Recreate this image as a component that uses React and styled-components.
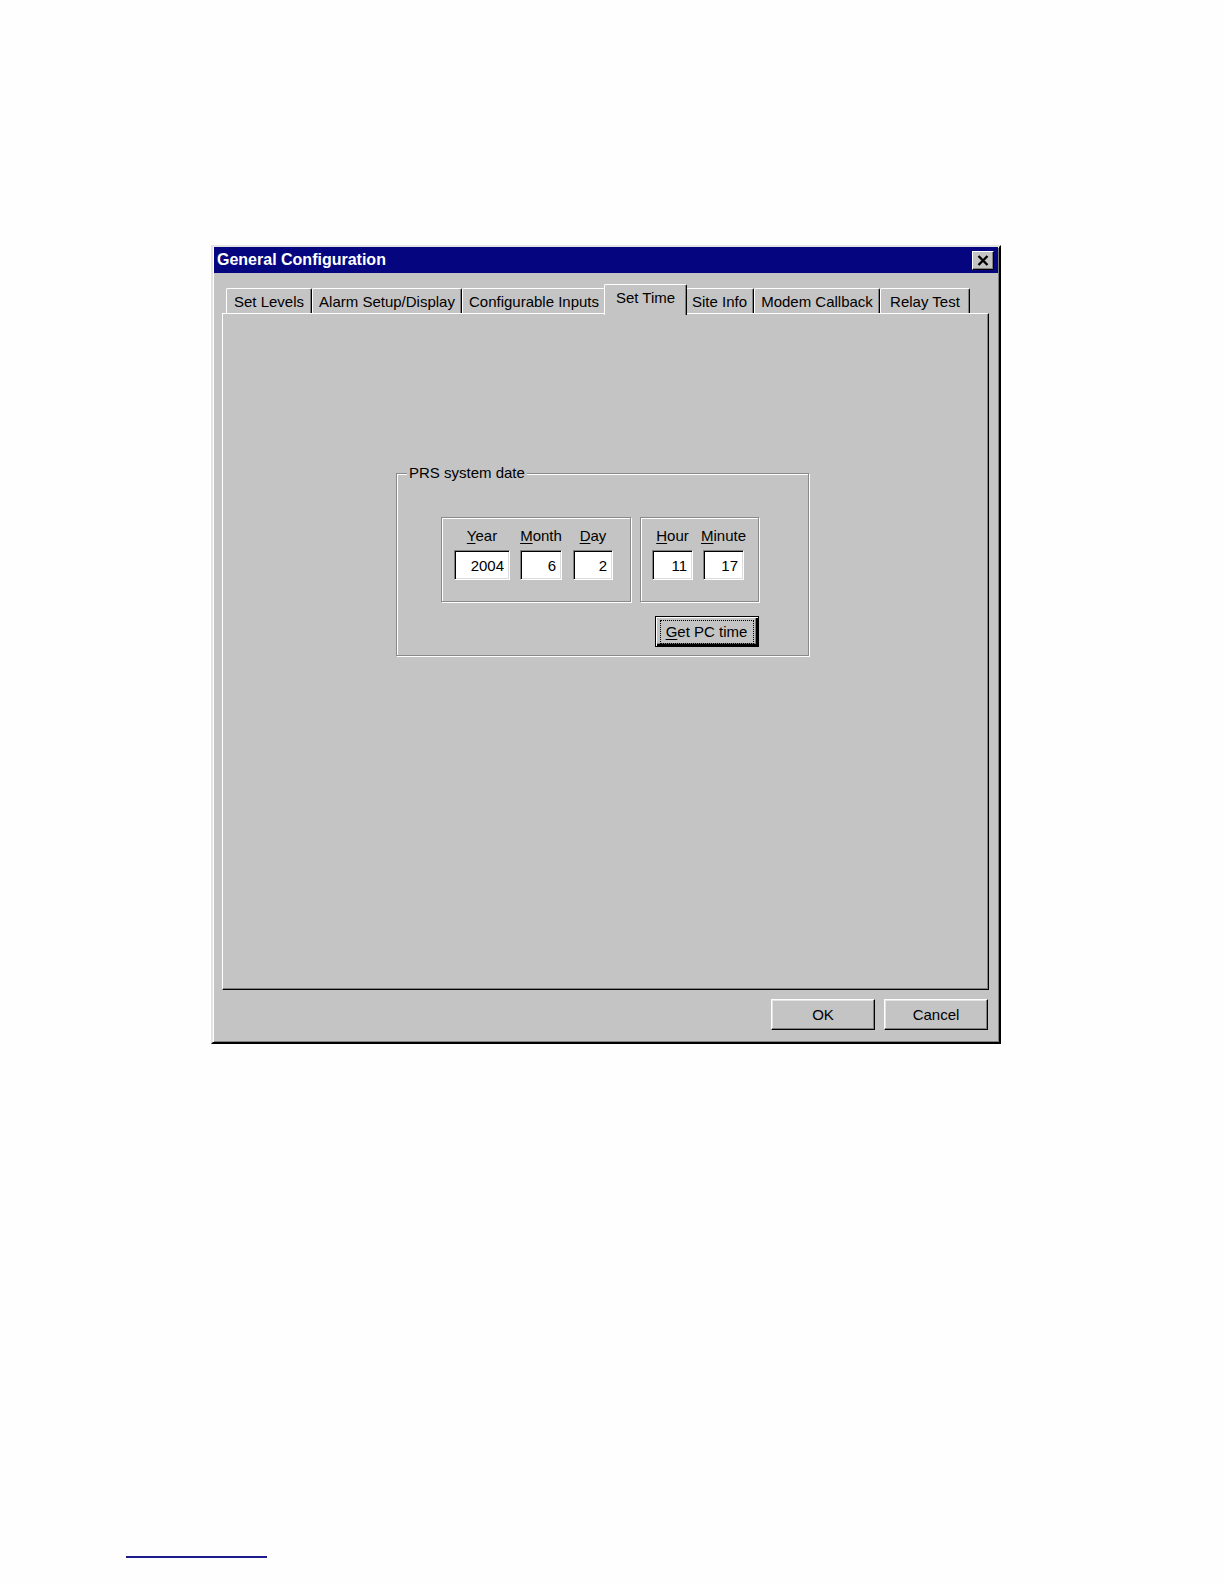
import React from "react";
import styled, { createGlobalStyle } from "styled-components";

const GlobalStyle = createGlobalStyle`
  html, body {
    margin: 0;
    padding: 0;
    background: #fefefe;
  }
  body {
    font-family: "Liberation Sans", Arial, sans-serif;
    font-size: 15px;
    color: #000;
  }
`;

const face = "#c4c4c4";

const Page = styled.div`
  width: 1224px;
  height: 1584px;
  padding-top: 245px;
  box-sizing: border-box;
  display: flex;
  flex-direction: column;
`;

const Dialog = styled.div`
  margin-left: 211px;
  width: 790px;
  height: 799px;
  box-sizing: border-box;
  background: ${face};
  border: 2px solid;
  border-color: #e4e4e4 #000 #000 #e4e4e4;
  box-shadow: inset 1px 1px #fff, inset -1px -1px #808080;
  padding: 0 1px 1px 1px;
  display: flex;
  flex-direction: column;
`;

const TitleBar = styled.div`
  height: 26px;
  background: #05057f;
  display: flex;
  align-items: center;
  justify-content: space-between;
  padding: 0 4px 0 3px;
`;

const Title = styled.span`
  color: #fff;
  font-weight: bold;
  font-size: 16px;
  letter-spacing: 0;
`;

const CloseButton = styled.div`
  width: 22px;
  height: 19px;
  box-sizing: border-box;
  background: ${face};
  border: 1px solid;
  border-color: #fff #000 #000 #fff;
  box-shadow: inset -1px -1px #808080;
  display: flex;
  align-items: center;
  justify-content: center;
`;

const Body = styled.div`
  flex: 1;
  display: flex;
  flex-direction: column;
  padding: 11px 9px 11px 8px;
`;

const TabRow = styled.div`
  height: 29px;
  display: flex;
  align-items: flex-end;
  padding-left: 4px;
`;

const Tab = styled.div`
  position: relative;
  box-sizing: border-box;
  width: ${(p) => (p.$active ? p.$w + 4 : p.$w)}px;
  height: ${(p) => (p.$active ? 31 : 25)}px;
  margin: 0 ${(p) => (p.$active ? -2 : 0)}px ${(p) => (p.$active ? -2 : 0)}px;
  z-index: ${(p) => (p.$active ? 2 : 1)};
  background: ${face};
  border-top: 1px solid #fff;
  border-left: 1px solid #fff;
  border-right: 1px solid #000;
  border-radius: 2px 2px 0 0;
  box-shadow: inset -1px 0 #808080;
  display: flex;
  align-items: ${(p) => (p.$active ? "flex-start" : "center")};
  padding-top: ${(p) => (p.$active ? 4 : 0)}px;
  justify-content: center;
  white-space: nowrap;
  font-size: 15px;
`;

const Panel = styled.div`
  flex: 1;
  box-sizing: border-box;
  border: 1px solid;
  border-color: #fff #000 #000 #fff;
  box-shadow: inset -1px -1px #808080;
  padding: 159px 0 0 173px;
`;

const GroupBox = styled.div`
  position: relative;
  width: 413px;
  height: 183px;
  box-sizing: border-box;
  border: 1px solid #8a8a8a;
  box-shadow: inset 1px 1px #fff, 1px 1px #fff;
  padding: 43px 0 0 44px;
`;

const GroupLabel = styled.span`
  position: absolute;
  top: -10px;
  left: 10px;
  padding: 0 2px;
  background: ${face};
  line-height: 18px;
`;

const GroupContent = styled.div`
  width: 318px;
  display: flex;
  flex-direction: column;
  align-items: flex-end;
`;

const BoxRow = styled.div`
  display: flex;
  gap: 9px;
`;

const EtchedBox = styled.div`
  width: ${(p) => p.$w}px;
  height: 85px;
  box-sizing: border-box;
  border: 1px solid #8a8a8a;
  box-shadow: inset 1px 1px #fff, 1px 1px #fff;
  padding: 9px 0 0 ${(p) => p.$pl}px;
  display: flex;
`;

const FieldColumn = styled.div`
  width: ${(p) => p.$w}px;
  margin-right: ${(p) => p.$gap || 0}px;
  display: flex;
  flex-direction: column;
  align-items: center;
  gap: 5px;
`;

const FieldLabel = styled.span`
  line-height: 18px;
  white-space: nowrap;
`;

const Key = styled.span`
  text-decoration: underline;
  text-underline-offset: 2px;
`;

const Field = styled.div`
  width: 100%;
  height: 30px;
  box-sizing: border-box;
  background: #fff;
  border: 1px solid;
  border-color: #808080 #fff #fff #808080;
  box-shadow: inset 1px 1px #000, inset -1px -1px #dcdcdc;
  display: flex;
  align-items: center;
  justify-content: flex-end;
  padding-right: 5px;
`;

const Button = styled.div`
  width: 104px;
  height: 31px;
  box-sizing: border-box;
  background: ${face};
  border: 1px solid;
  border-color: ${(p) => (p.$default ? "#000" : "#fff #000 #000 #fff")};
  box-shadow: ${(p) =>
    p.$default
      ? "inset 1px 1px #fff, inset -2px -2px #000, inset -3px -3px #808080"
      : "inset -1px -1px #808080, inset 1px 1px #e4e4e4"};
  display: flex;
  align-items: center;
  justify-content: center;
  margin-top: ${(p) => p.$mt || 0}px;
  font-size: 15px;
`;

const FocusRing = styled.span`
  border: 1px dotted #000;
  padding: 2px 6px 2px 5px;
  line-height: 18px;
`;

const ButtonRow = styled.div`
  display: flex;
  justify-content: flex-end;
  gap: 9px;
  margin-top: 9px;
  margin-right: 1px;
`;

const FootRule = styled.div`
  margin-top: 512px;
  margin-left: 126px;
  width: 141px;
  height: 2px;
  background: #1c1c8c;
`;

const tabs = [
  { label: "Set Levels", w: 86 },
  { label: "Alarm Setup/Display", w: 150 },
  { label: "Configurable Inputs", w: 144 },
  { label: "Set Time", w: 79, active: true },
  { label: "Site Info", w: 69 },
  { label: "Modem Callback", w: 126 },
  { label: "Relay Test", w: 90 },
];

function Labeled({ k, rest, value, w, gap }) {
  return (
    <FieldColumn $w={w} $gap={gap}>
      <FieldLabel>
        <Key>{k}</Key>
        {rest}
      </FieldLabel>
      <Field>{value}</Field>
    </FieldColumn>
  );
}

export default function App() {
  return (
    <>
      <GlobalStyle />
      <Page>
        <Dialog>
          <TitleBar>
            <Title>General Configuration</Title>
            <CloseButton>
              <svg width="12" height="11" viewBox="0 0 12 11">
                <path d="M1.5 1 L10.5 10 M10.5 1 L1.5 10" stroke="#000" strokeWidth="2.4" />
              </svg>
            </CloseButton>
          </TitleBar>
          <Body>
            <TabRow>
              {tabs.map((t) => (
                <Tab key={t.label} $w={t.w} $active={t.active}>
                  {t.label}
                </Tab>
              ))}
            </TabRow>
            <Panel>
              <GroupBox>
                <GroupLabel>PRS system date</GroupLabel>
                <GroupContent>
                  <BoxRow>
                    <EtchedBox $w={190} $pl={12}>
                      <Labeled k="Y" rest="ear" value="2004" w={56} gap={10} />
                      <Labeled k="M" rest="onth" value="6" w={42} gap={11} />
                      <Labeled k="D" rest="ay" value="2" w={40} />
                    </EtchedBox>
                    <EtchedBox $w={119} $pl={11}>
                      <Labeled k="H" rest="our" value="11" w={41} gap={10} />
                      <Labeled k="M" rest="inute" value="17" w={41} />
                    </EtchedBox>
                  </BoxRow>
                  <Button $default $mt={14}>
                    <FocusRing>
                      <Key>G</Key>et PC time
                    </FocusRing>
                  </Button>
                </GroupContent>
              </GroupBox>
            </Panel>
            <ButtonRow>
              <Button>OK</Button>
              <Button>Cancel</Button>
            </ButtonRow>
          </Body>
        </Dialog>
        <FootRule />
      </Page>
    </>
  );
}
